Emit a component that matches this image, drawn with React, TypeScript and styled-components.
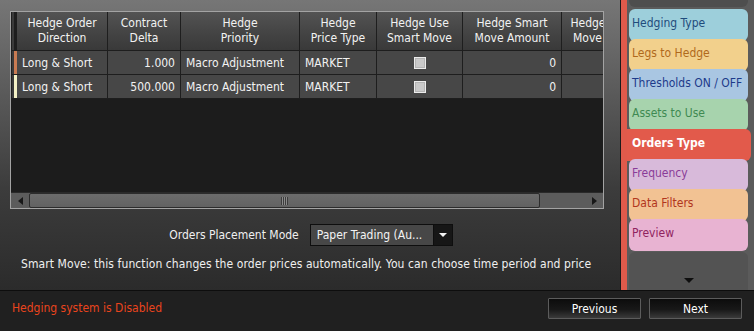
import styled, { createGlobalStyle } from "styled-components";

const GlobalStyle = createGlobalStyle`
  html, body {
    margin: 0;
    padding: 0;
    background: #202020;
  }
  body {
    font-family: "DejaVu Sans Condensed", "Liberation Sans", Arial, sans-serif;
    font-size: 12px;
  }
`;

const Root = styled.div`
  width: 754px;
  height: 331px;
  display: flex;
  flex-direction: column;
  overflow: hidden;
`;

const Workspace = styled.div`
  height: 290px;
  display: flex;
`;

const Main = styled.section`
  width: 620px;
  box-sizing: border-box;
  padding: 11px 16px 0 10px;
  display: flex;
  flex-direction: column;
  background: linear-gradient(180deg, #767676 0%, #5c5c5c 30%, #3c3c3c 65%, #2b2b2b 100%);
`;

const GridPanel = styled.div`
  width: 594px;
  height: 198px;
  box-sizing: border-box;
  border: 1px solid #a3a3a3;
  background: #1c1c1c;
  display: flex;
  flex-direction: column;
`;

const GridViewport = styled.div`
  flex: 1;
  overflow: hidden;
`;

const Table = styled.table`
  table-layout: fixed;
  border-collapse: separate;
  border-spacing: 0;
  width: 640px;
`;

const Col = styled.col<{ $w: number }>`
  width: ${(p) => p.$w}px;
`;

const HeadCell = styled.th`
  height: 38px;
  padding: 0 2px;
  border-right: 1px solid #1e1e1e;
  border-bottom: 1px solid #1e1e1e;
  background: linear-gradient(180deg, #535353 0%, #444 55%, #393939 100%);
  color: #f2f2f2;
  font-weight: normal;
  line-height: 15px;
  text-align: center;
  white-space: nowrap;
  overflow: hidden;
`;

const RowHead = styled.td<{ $mark: string }>`
  padding: 0;
  border-bottom: 1px solid #1e1e1e;
  background: linear-gradient(
    90deg,
    #1e1e1e 0 1px,
    #3a3a3a 1px 3px,
    ${(p) => p.$mark} 3px 6px
  );
`;

const Cell = styled.td<{ $align?: "left" | "right" | "center" }>`
  height: 23px;
  padding: 0 5px;
  border-right: 1px solid #1e1e1e;
  border-bottom: 1px solid #1e1e1e;
  background: #474747;
  color: #f2f2f2;
  text-align: ${(p) => p.$align ?? "left"};
  white-space: nowrap;
  overflow: hidden;
`;

const CheckBox = styled.span`
  display: inline-block;
  width: 10px;
  height: 10px;
  vertical-align: middle;
  border: 1px solid #ececec;
  background: #cacaca;
  box-shadow: inset 0 0 0 1px #b4b4b4;
`;

const HScroll = styled.div`
  height: 16px;
  box-sizing: border-box;
  border-top: 1px solid #2a2a2a;
  background: #5c5c5c;
  display: flex;
`;

const ScrollArrow = styled.div<{ $dir: "left" | "right" }>`
  width: 18px;
  display: flex;
  align-items: center;
  justify-content: center;
  &::after {
    content: "";
    border-top: 4px solid transparent;
    border-bottom: 4px solid transparent;
    ${(p) =>
      p.$dir === "left"
        ? "border-right: 5px solid #181818;"
        : "border-left: 5px solid #181818;"}
  }
`;

const Thumb = styled.div`
  width: 511px;
  box-sizing: border-box;
  border: 1px solid #2c2c2c;
  border-radius: 2px;
  background: linear-gradient(180deg, #6c6c6c, #626262);
  display: flex;
  align-items: center;
  justify-content: center;
`;

const Grip = styled.div`
  width: 7px;
  height: 8px;
  background: repeating-linear-gradient(90deg, #3c3c3c 0 1px, #8a8a8a 1px 2px);
`;

const Track = styled.div`
  flex: 1;
`;

const PlacementRow = styled.div`
  margin-top: 15px;
  display: flex;
  align-items: center;
  justify-content: center;
  gap: 11px;
  padding-left: 8px;
  color: #f0f0f0;
`;

const Select = styled.div`
  width: 143px;
  height: 22px;
  box-sizing: border-box;
  border: 1px solid #0e0e0e;
  background: #474747;
  display: flex;
`;

const SelectText = styled.span`
  flex: 1;
  padding-left: 6px;
  line-height: 20px;
  color: #f4f4f4;
  white-space: nowrap;
`;

const SelectButton = styled.span`
  width: 18px;
  background: #161616;
  border-left: 1px solid #0e0e0e;
  display: flex;
  align-items: center;
  justify-content: center;
  &::after {
    content: "";
    border-left: 4px solid transparent;
    border-right: 4px solid transparent;
    border-top: 4px solid #f2f2f2;
  }
`;

const HelpText = styled.p`
  margin: 11px 0 0 11px;
  line-height: 15px;
  color: #f0f0f0;
  white-space: nowrap;
  letter-spacing: 0.08px;
`;

const Sidebar = styled.nav`
  width: 134px;
  box-sizing: border-box;
  border-left: 1px solid #1b1b1b;
  background: #5b5b5b;
  display: flex;
  overflow: hidden;
`;

const RedStrip = styled.div`
  width: 6px;
  background: #e05a4b;
`;

const TabList = styled.div`
  flex: 1;
  display: flex;
  flex-direction: column;
  padding: 0 6px 0 2px;
`;

const GhostTab = styled.div`
  height: 7px;
  margin-bottom: 2px;
  border-radius: 0 0 6px 6px;
  background: #4e4e4e;
`;

const Tab = styled.div<{ $bg: string; $fg: string; $active?: boolean }>`
  height: 32px;
  box-sizing: border-box;
  padding: 7px 0 0 ${(p) => (p.$active ? 5 : 3)}px;
  margin: -2px ${(p) => (p.$active ? -3 : 0)}px 0 ${(p) => (p.$active ? -2 : 0)}px;
  border-radius: ${(p) => (p.$active ? "0 6px 6px 0" : "6px")};
  background: ${(p) => p.$bg};
  color: ${(p) => p.$fg};
  font-weight: ${(p) => (p.$active ? "bold" : "normal")};
  line-height: 15px;
  white-space: nowrap;
  &:nth-child(2) {
    margin-top: 0;
  }
`;

const EndTab = styled.div`
  flex: 1;
  margin-top: 1px;
  border-radius: 6px 6px 0 0;
  background: #535353;
  display: flex;
  align-items: flex-end;
  justify-content: center;
  padding-bottom: 7px;
  &::after {
    content: "";
    border-left: 5px solid transparent;
    border-right: 5px solid transparent;
    border-top: 5px solid #0e0e0e;
  }
`;

const Footer = styled.footer`
  height: 41px;
  box-sizing: border-box;
  border-top: 1px solid #0d0d0d;
  background: #202020;
  display: flex;
  align-items: flex-start;
  justify-content: space-between;
  padding: 7px 12px 0 12px;
`;

const Status = styled.span`
  line-height: 21px;
  color: #ea441d;
`;

const NavButtons = styled.div`
  display: flex;
  gap: 8px;
`;

const NavButton = styled.button`
  width: 93px;
  height: 21px;
  box-sizing: border-box;
  border: 1px solid #5c5c5c;
  border-radius: 1px;
  background: linear-gradient(180deg, #0c0c0c 0%, #181818 55%, #3a3a3a 100%);
  color: #fff;
  font: inherit;
  padding: 0;
`;

const columns = [6, 91, 73, 119, 77, 86, 99, 89];

const headers = [
  ["Hedge Order", "Direction"],
  ["Contract", "Delta"],
  ["Hedge", "Priority"],
  ["Hedge", "Price Type"],
  ["Hedge Use", "Smart Move"],
  ["Hedge Smart", "Move Amount"],
  ["Hedge Smart", "Move Period"],
];

const rows = [
  { mark: "#c97b52", direction: "Long & Short", delta: "1.000" },
  { mark: "#f4f1c6", direction: "Long & Short", delta: "500.000" },
];

const tabs = [
  { label: "Hedging Type", bg: "#9dcfdb", fg: "#1f4c7c" },
  { label: "Legs to Hedge", bg: "#f2d08c", fg: "#b0691c" },
  { label: "Thresholds ON / OFF", bg: "#a9c6e2", fg: "#1d3a8a" },
  { label: "Assets to Use", bg: "#a7d3ad", fg: "#3f8a52" },
  { label: "Orders Type", bg: "#e25a4b", fg: "#ffffff", active: true },
  { label: "Frequency", bg: "#d8bada", fg: "#8a3c98" },
  { label: "Data Filters", bg: "#f2c293", fg: "#b1361d" },
  { label: "Preview", bg: "#e8b3d2", fg: "#90235f" },
];

export default function App() {
  return (
    <Root>
      <GlobalStyle />
      <Workspace>
        <Main>
          <GridPanel>
            <GridViewport>
              <Table>
                <colgroup>
                  {columns.map((w, i) => (
                    <Col key={i} $w={w} />
                  ))}
                </colgroup>
                <thead>
                  <tr>
                    <RowHead as="th" $mark="#1e1e1e" />
                    {headers.map(([a, b], i) => (
                      <HeadCell key={i}>
                        {a}
                        <br />
                        {b}
                      </HeadCell>
                    ))}
                  </tr>
                </thead>
                <tbody>
                  {rows.map((r, i) => (
                    <tr key={i}>
                      <RowHead $mark={r.mark} />
                      <Cell>{r.direction}</Cell>
                      <Cell $align="right">{r.delta}</Cell>
                      <Cell>Macro Adjustment</Cell>
                      <Cell>MARKET</Cell>
                      <Cell $align="center">
                        <CheckBox />
                      </Cell>
                      <Cell $align="right">0</Cell>
                      <Cell />
                    </tr>
                  ))}
                </tbody>
              </Table>
            </GridViewport>
            <HScroll>
              <ScrollArrow $dir="left" />
              <Thumb>
                <Grip />
              </Thumb>
              <Track />
              <ScrollArrow $dir="right" />
            </HScroll>
          </GridPanel>
          <PlacementRow>
            <span>Orders Placement Mode</span>
            <Select>
              <SelectText>Paper Trading (Au...</SelectText>
              <SelectButton />
            </Select>
          </PlacementRow>
          <HelpText>
            Smart Move: this function changes the order prices automatically. You can choose time
            period and price
          </HelpText>
        </Main>
        <Sidebar>
          <RedStrip />
          <TabList>
            <GhostTab />
            {tabs.map((t) => (
              <Tab key={t.label} $bg={t.bg} $fg={t.fg} $active={t.active}>
                {t.label}
              </Tab>
            ))}
            <EndTab />
          </TabList>
        </Sidebar>
      </Workspace>
      <Footer>
        <Status>Hedging system is Disabled</Status>
        <NavButtons>
          <NavButton>Previous</NavButton>
          <NavButton>Next</NavButton>
        </NavButtons>
      </Footer>
    </Root>
  );
}
